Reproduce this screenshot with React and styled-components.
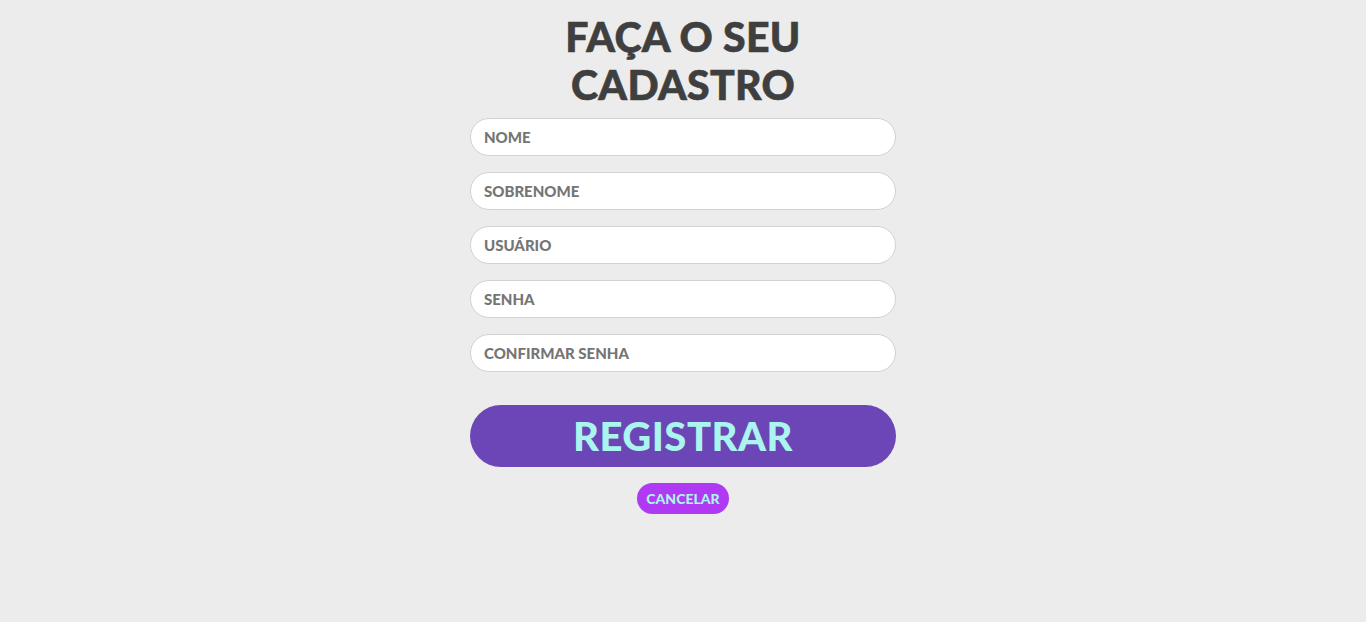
import React from 'react';
import styled, {createGlobalStyle} from 'styled-components';

const GlobalStyle = createGlobalStyle`
  html, body {
    margin: 0;
    padding: 0;
    background-color: #ebeceb;
    font-family: 'Lato', 'Inter', sans-serif;
  }
  * {
    box-sizing: border-box;
  }
`;

function App() {
  const fields = ['NOME', 'SOBRENOME', 'USUÁRIO', 'SENHA', 'CONFIRMAR SENHA'];

  return (
    <>
      <GlobalStyle />
      <Page>
        <Title>
          FAÇA O SEU
          <br />
          CADASTRO
        </Title>
        <Form onSubmit={(e) => e.preventDefault()}>
          {fields.map((f) => (
            <Input
              key={f}
              placeholder={f}
              type={f.includes('SENHA') ? 'password' : 'text'}
            />
          ))}
          <Register type="submit">REGISTRAR</Register>
          <Cancel type="button">CANCELAR</Cancel>
        </Form>
      </Page>
    </>
  );
}

const Page = styled.div`
  min-height: 622px;
  display: flex;
  flex-direction: column;
  align-items: center;
  padding-top: 13px;
`;

const Title = styled.h1`
  margin: 0 0 9px;
  font-family: 'Lato', sans-serif;
  font-weight: 900;
  font-size: 41px;
  line-height: 48px;
  letter-spacing: 0.3px;
  text-align: center;
  color: #3f3f3f;
  -webkit-text-stroke: 0.6px #3f3f3f;
`;

const Form = styled.form`
  width: 426px;
  display: flex;
  flex-direction: column;
  align-items: center;
`;

const Input = styled.input`
  width: 100%;
  height: 38px;
  margin-bottom: 16px;
  padding: 0 13px;
  border: 1px solid #cfd2d6;
  border-radius: 19px;
  background-color: #ffffff;
  font-family: 'Lato', sans-serif;
  font-weight: 900;
  font-size: 15px;
  color: #3f3f3f;
  outline: none;

  ::placeholder {
    color: #6b717a;
    opacity: 1;
  }
`;

const Register = styled.button`
  width: 100%;
  height: 62px;
  margin-top: 17px;
  border: none;
  border-radius: 31px;
  background-color: #6c45b6;
  color: #aaf5ee;
  font-family: 'Lato', sans-serif;
  font-weight: 900;
  font-size: 40px;
  letter-spacing: 0.5px;
  cursor: pointer;
`;

const Cancel = styled.button`
  margin-top: 16px;
  height: 31px;
  padding: 0 9px;
  border: none;
  border-radius: 16px;
  background-color: #b03af3;
  color: #aaf5ee;
  font-family: 'Lato', sans-serif;
  font-weight: 900;
  font-size: 14px;
  cursor: pointer;
`;

export default App;
